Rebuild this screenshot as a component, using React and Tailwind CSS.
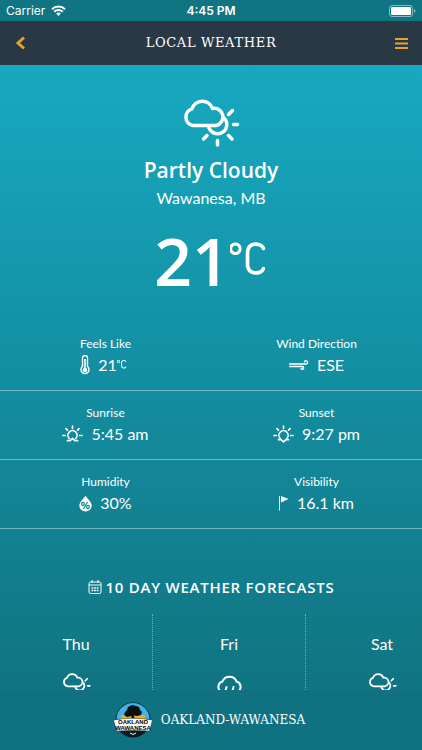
import { WiCelsius } from 'react-icons/wi'

const FORECAST = [
  { day: 'Thu', icon: PartlyCloudyIcon },
  { day: 'Fri', icon: RainIcon },
  { day: 'Sat', icon: PartlyCloudyIcon },
]

function PartlyCloudyIcon({ className }) {
  return (
    <svg viewBox="0 0 58 50" className={className} fill="none" stroke="currentColor" strokeWidth="3.500" strokeLinecap="round" strokeLinejoin="round" aria-hidden="true">
      <path d="M11 28.500A8.600 8.600 0 0 1 10 11.800A10.800 10.800 0 0 1 30.500 11.500A8.600 8.600 0 0 1 34 28.500Z" />
      <path d="M26.500 29A9.200 9.200 0 1 0 41.500 20.500" />
      <path d="M46.500 17.500l4-4M51.500 27.500h4M46.500 38.500l3.500 3.500M35.500 43.500v4.500M25 38.500l-3.500 3.500" />
    </svg>
  )
}

function RainIcon({ className }) {
  return (
    <svg viewBox="0 0 58 50" className={className} fill="none" stroke="currentColor" strokeWidth="4" strokeLinecap="round" aria-hidden="true">
      <path d="M12 39A11 11 0 0 1 15 19A15 15 0 0 1 43 19A11 11 0 0 1 46 39" />
      <path d="M23 30l-2 7M37 30l-2 7M30 41l-2 6" />
    </svg>
  )
}

function ThermometerIcon() {
  return (
    <svg viewBox="0 0 10 20" className="h-5 w-2.5" fill="none" stroke="currentColor" aria-hidden="true">
      <path d="M2.500 11.500V3a2.500 2.500 0 0 1 5 0v8.500a4 4 0 1 1-5 0z" strokeWidth="1.400" />
      <path d="M5 4v10" strokeWidth="1.600" />
      <circle cx="5" cy="15" r="2.300" fill="currentColor" stroke="none" />
    </svg>
  )
}

function WindIcon() {
  return (
    <svg viewBox="0 0 20 10" className="h-2.5 w-5" fill="none" stroke="currentColor" strokeWidth="1.400" strokeLinecap="round" aria-hidden="true">
      <path d="M.7 4h16.300a1.600 1.600 0 1 0-1.500-2.200" />
      <path d="M.7 6.500h12.600a1.400 1.400 0 1 1-1.300 2" />
    </svg>
  )
}

function SunIcon({ horizon }) {
  return (
    <svg viewBox="0 0 21 18" className="h-[18px] w-[21px]" fill="none" stroke="currentColor" strokeWidth="1.700" strokeLinecap="round" strokeLinejoin="round" aria-hidden="true">
      <path d="M7.200 13.500a4.600 4.600 0 1 1 6.600 0" />
      <path d="M10.500 1v2.200M4 3.700l1.400 1.500M17 3.700l-1.400 1.500M1 10.500h2.200M17.800 10.500H20" />
      <path d={horizon} />
    </svg>
  )
}

function HumidityIcon() {
  return (
    <svg viewBox="0 0 13 17" className="h-[17px] w-[13px]" aria-hidden="true">
      <path d="M6.500 .5C8 3.500 12.700 7 12.700 10.500a6.200 6 0 0 1-12.400 0C.3 7 5 3.500 6.500.5z" fill="currentColor" />
      <g fill="none" stroke="#128497" strokeWidth="1.200">
        <ellipse cx="4" cy="9" rx="1.300" ry="1.700" />
        <ellipse cx="9" cy="12" rx="1.300" ry="1.700" />
        <path d="M8.500 7l-4 7" />
      </g>
    </svg>
  )
}

function FlagIcon() {
  return (
    <svg viewBox="0 0 10 16" className="h-4 w-2.5" fill="currentColor" aria-hidden="true">
      <path d="M0 1h1v14.500H0zM2 1l7.500 3L2 7.500z" />
    </svg>
  )
}

function CalendarIcon() {
  return (
    <svg viewBox="0 0 14 15" className="h-4 w-3.5" fill="none" stroke="currentColor" aria-hidden="true">
      <rect x="1" y="2.500" width="12" height="11.500" rx="1.500" />
      <path d="M1 5.500h12M4 .5v3M10 .5v3" />
      <path d="M3.500 8.500h7M3.500 11h7" strokeWidth="1.500" strokeDasharray="1.800 .8" />
    </svg>
  )
}

// the stock glyph sits in a 30x30 box with wide margins, so crop it
function Celsius({ className }) {
  return <WiCelsius viewBox="10 8.500 11 10" className={className} />
}

function Logo() {
  return (
    <svg viewBox="0 0 40 36" className="h-9 w-10" aria-hidden="true">
      <circle cx="20" cy="18" r="17.500" fill="#0b1a20" />
      <path d="M3.500 17a16.500 16 0 0 1 33 0z" fill="#3fb4e4" />
      <path d="M8 13h24v5H8z" fill="#e9b121" />
      <path d="M18.500 18v-4l-4.500 1-3-2 1-3 2-2 1-3 4-2 4 1 3 1 1 3 2 2-1 3-4 1-3-.5 .5 4.500z" fill="#0a1012" />
      <path d="M.5 18Q20 14.500 39.500 18L36.500 29Q20 28 3.500 29z" fill="#fff" stroke="#1a2529" strokeWidth=".5" />
      <path d="M17 31q3 3 6 0" stroke="#fff" fill="none" />
      <text x="20" y="22" textAnchor="middle" fontSize="6" className="font-['Liberation_Sans',sans-serif] font-bold">OAKLAND</text>
      <text x="20" y="28" textAnchor="middle" fontSize="6" className="font-['Liberation_Sans',sans-serif] font-bold">WAWANESA</text>
    </svg>
  )
}

function StatusBar() {
  return (
    <div className="grid h-[21px] shrink-0 grid-cols-3 items-center bg-[#107583] px-1.5 font-['Inter',sans-serif] text-xs">
      <div className="flex items-center gap-1.5">
        <span>Carrier</span>
        <svg viewBox="0 0 15 11" className="h-[11px] w-[15px]" fill="none" stroke="currentColor" strokeWidth="2" aria-hidden="true">
          <path d="M1 4.200a9.200 9.200 0 0 1 13 0M3.300 6.700a6 6 0 0 1 8.400 0" />
          <path d="M5.200 8.500a3.300 3.300 0 0 1 4.600 0L7.500 11z" fill="currentColor" stroke="none" />
        </svg>
      </div>
      <span className="text-center font-semibold">4:45 PM</span>
      <svg viewBox="0 0 27 12" className="h-3 w-[27px] justify-self-end" aria-hidden="true">
        <rect x=".5" y=".5" width="23" height="11" rx="2.500" fill="none" stroke="#fff" strokeOpacity=".5" />
        <rect x="2" y="2" width="20" height="8" rx="1" fill="#fff" />
        <path d="M25 4v4q1.500-.5 1.500-2T25 4" fill="#fff" fillOpacity=".5" />
      </svg>
    </div>
  )
}

function Stat({ label, icon, children }) {
  return (
    <div className="flex flex-col items-center pt-3.5">
      <span className="text-xs leading-4">{label}</span>
      <div className="mt-px flex h-6 items-center gap-2 text-base">
        {icon}
        <span className="flex">{children}</span>
      </div>
    </div>
  )
}

export default function App() {
  return (
    <div className="flex h-screen flex-col overflow-hidden bg-[#107280] font-['Lato',sans-serif] text-white">
      <StatusBar />
      <header className="flex h-11 shrink-0 items-center justify-between bg-[#293845] px-3.5">
        <button type="button" aria-label="Back" className="w-4 text-[#e9a12c]">
          <svg viewBox="0 0 12 14" className="h-3.5 w-3" fill="none" stroke="currentColor" strokeWidth="3" aria-hidden="true">
            <path d="M10 1.500L4 7l6 5.500" />
          </svg>
        </button>
        <h1 className="font-['DejaVu_Serif',serif] text-[13px] tracking-wider">LOCAL WEATHER</h1>
        <button type="button" aria-label="Menu" className="flex w-4 justify-end text-[#e9a12c]">
          <svg viewBox="0 0 13 11" className="h-[11px] w-[13px]" fill="currentColor" aria-hidden="true">
            <path d="M0 0h13v2H0zM0 4.500h13v2H0zM0 9h13v2H0z" />
          </svg>
        </button>
      </header>

      <main className="min-h-0 flex-1 overflow-hidden bg-linear-to-b from-[#17a9c1] to-[#107482]">
        <section className="flex flex-col items-center pt-8">
          <PartlyCloudyIcon className="h-[50px] w-[58px]" />
          <h2 className="mt-[9px] font-['Open_Sans','Noto_Sans',sans-serif] text-[21px] leading-7 font-semibold">Partly Cloudy</h2>
          <p className="text-base leading-7">Wawanesa, MB</p>
          <div className="mt-2 flex items-start">
            <span className="font-['Open_Sans','Noto_Sans',sans-serif] text-[66px] leading-20 font-semibold">21</span>
            <Celsius className="mt-5 h-[35px] w-[38px]" />
          </div>
        </section>

        <section className="mt-[22px]">
          <div className="grid h-[69px] grid-cols-2 border-b border-white/40">
            <Stat label="Feels Like" icon={<ThermometerIcon />}>
              21<Celsius className="mt-1.5 mr-1 h-2.5 w-2.5" />
            </Stat>
            <Stat label="Wind Direction" icon={<WindIcon />}>ESE</Stat>
          </div>
          <div className="grid h-[69px] grid-cols-2 border-b border-white/40">
            <Stat label="Sunrise" icon={<SunIcon horizon="M5.500 15.700H8l2.500-2.200 2.500 2.200h2.500" />}>5:45 am</Stat>
            <Stat label="Sunset" icon={<SunIcon horizon="M5.500 14.700H8l2.500 2.200 2.500-2.200h2.500" />}>9:27 pm</Stat>
          </div>
          <div className="grid h-[69px] grid-cols-2 border-b border-white/40">
            <Stat label="Humidity" icon={<HumidityIcon />}>30%</Stat>
            <Stat label="Visibility" icon={<FlagIcon />}>16.1 km</Stat>
          </div>
        </section>

        <section className="mt-[46px]">
          <h3 className="flex items-center justify-center gap-1 font-['Open_Sans','Noto_Sans',sans-serif] text-[15px] leading-6 font-semibold tracking-wider">
            <CalendarIcon />
            10 DAY WEATHER FORECASTS
          </h3>
          <div className="mt-[15px] flex">
            {FORECAST.map(({ day, icon: Icon }) => (
              <div key={day} className="flex h-44 w-[153px] shrink-0 flex-col items-center border-r border-dotted border-white/40 pt-[18px]">
                <span className="text-base leading-6">{day}</span>
                <Icon className="mt-4 h-[25px] w-[29px]" />
              </div>
            ))}
          </div>
        </section>
      </main>

      <footer className="flex h-15 shrink-0 items-center justify-center gap-2 bg-[#107280] pr-1">
        <Logo />
        <span className="font-['DejaVu_Serif',serif] text-xs">OAKLAND-WAWANESA</span>
      </footer>
    </div>
  )
}
